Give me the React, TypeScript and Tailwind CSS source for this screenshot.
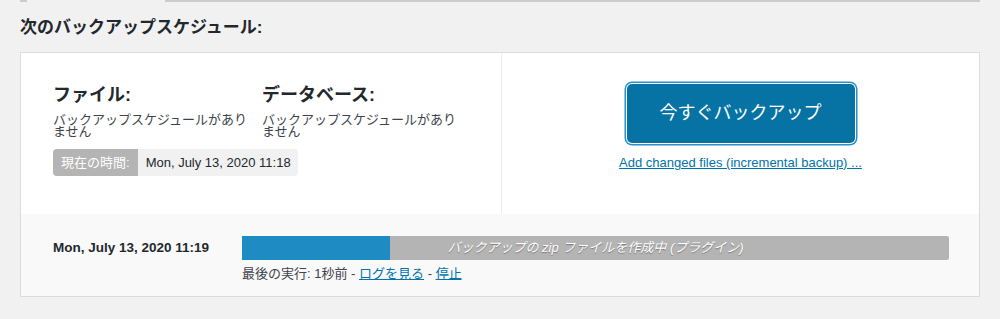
import React from "react";

const font = "font-['Liberation_Sans','Noto_Sans_CJK_JP',sans-serif]";

const ScheduleColumn = ({ title }: { title: string }) => (
  <div className="w-[209px] pr-[8px]">
    <h3 className="text-[18px] leading-[24px] font-bold text-[#23282d]">{title}</h3>
    <p className="mt-[7px] text-[13px] leading-[12px] text-[#3c434a]">
      バックアップスケジュールがありません
    </p>
  </div>
);

export default function App() {
  return (
    <div className={`${font} min-h-[319px] bg-[#f1f1f1] px-[20px] text-[#23282d]`}>
      {/* tab strip bottom line */}
      <div className="flex h-[2px]">
        <div className="w-[7px] bg-[#ccc]" />
        <div className="w-[138px]" />
        <div className="flex-1 bg-[#ccc]" />
      </div>

      <h2 className="pt-[15px] text-[17px] leading-[22px] font-bold text-[#23282d]">
        次のバックアップスケジュール:
      </h2>

      <div className="mt-[13px] border border-[#dcdcde] bg-white">
        <div className="flex h-[161px]">
          {/* left: schedules */}
          <div className="w-[480px] pl-[32px] pt-[30px]">
            <div className="flex">
              <ScheduleColumn title="ファイル:" />
              <ScheduleColumn title="データベース:" />
            </div>
            <div className="mt-[11px] flex h-[27px] w-fit overflow-hidden rounded-[4px] text-[13px]">
              <span className="flex items-center bg-[#b4b4b4] px-[8px] text-white">現在の時間:</span>
              <span className="flex items-center bg-[#f1f1f1] pl-[8px] pr-[7px] text-[#23282d]">
                Mon, July 13, 2020 11:18
              </span>
            </div>
          </div>

          {/* right: actions */}
          <div className="flex flex-1 flex-col items-center border-l border-[#eeeeee] pt-[31px]">
            <button className="flex h-[59px] w-[228px] items-center justify-center rounded-[5px] bg-[#0673a4] text-[18px] text-white shadow-[0_0_0_1px_#fff,0_0_0_2.5px_#2a90c8]">
              今すぐバックアップ
            </button>
            <a href="#" className="mt-[12px] text-[13px] leading-[16px] text-[#0073aa] underline">
              Add changed files (incremental backup) ...
            </a>
          </div>
        </div>

        {/* running job */}
        <div className="flex h-[82px] bg-[#f9f9f9] pt-[22px]">
          <div className="w-[221px] pl-[32px] pt-[4px] text-[13.5px] font-bold leading-[16px] text-[#23282d]">
            Mon, July 13, 2020 11:19
          </div>
          <div className="w-[707px]">
            <div className="relative flex h-[24px] overflow-hidden rounded-r-[2px] bg-[#b4b4b4]">
              <div className="w-[148px] bg-[#1e8cc3]" />
              <span className="absolute inset-0 flex items-center justify-center text-[13px] italic text-white [text-shadow:0_1px_1px_rgba(0,0,0,0.35)]">
                バックアップの zip ファイルを作成中 (プラグイン)
              </span>
            </div>
            <p className="mt-[6px] text-[13px] leading-[16px] text-[#3c434a]">
              最後の実行: 1秒前 -{" "}
              <a href="#" className="text-[#0073aa] underline">ログを見る</a> -{" "}
              <a href="#" className="text-[#0073aa] underline">停止</a>
            </p>
          </div>
        </div>
      </div>
    </div>
  );
}
